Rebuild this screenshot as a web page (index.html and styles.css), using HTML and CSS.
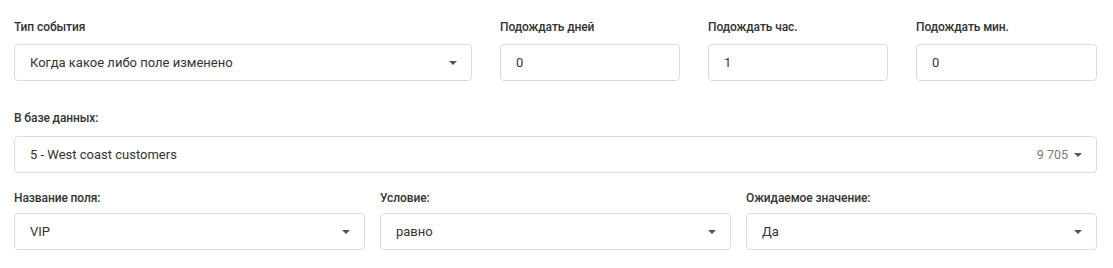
FILE: index.html
```html
<!DOCTYPE html>
<html lang="ru">
<head>
<meta charset="utf-8">
<title>Trigger</title>
<link rel="stylesheet" href="styles.css">
</head>
<body>
<div class="form">
  <div class="row row-top">
    <div class="field">
      <div class="label">Тип события</div>
      <div class="control select">
        <span class="value">Когда какое либо поле изменено</span>
        <span class="caret"></span>
      </div>
    </div>
    <div class="field">
      <div class="label">Подождать дней</div>
      <div class="control"><span class="value">0</span></div>
    </div>
    <div class="field">
      <div class="label">Подождать час.</div>
      <div class="control"><span class="value">1</span></div>
    </div>
    <div class="field">
      <div class="label">Подождать мин.</div>
      <div class="control"><span class="value">0</span></div>
    </div>
  </div>

  <div class="row row-db">
    <div class="field">
      <div class="label">В базе данных:</div>
      <div class="control select">
        <span class="value">5 - West coast customers</span>
        <span class="count">9 705</span>
        <span class="caret"></span>
      </div>
    </div>
  </div>

  <div class="row row-cond">
    <div class="field tight">
      <div class="label">Название поля:</div>
      <div class="control select">
        <span class="value">VIP</span>
        <span class="caret"></span>
      </div>
    </div>
    <div class="field tight">
      <div class="label">Условие:</div>
      <div class="control select">
        <span class="value">равно</span>
        <span class="caret"></span>
      </div>
    </div>
    <div class="field tight">
      <div class="label">Ожидаемое значение:</div>
      <div class="control select">
        <span class="value">Да</span>
        <span class="caret"></span>
      </div>
    </div>
  </div>
</div>
</body>
</html>
```

FILE: styles.css
```css
html, body {
  margin: 0;
  padding: 0;
  background: #ffffff;
}

body {
  font-family: Roboto, "Noto Sans", "Liberation Sans", sans-serif;
  color: #333333;
}

.form {
  padding: 19px 16px 0 14px;
}

.row {
  display: grid;
}

.row-top {
  grid-template-columns: 458px 180px 180px 1fr;
  column-gap: 28px;
}

.row-db {
  grid-template-columns: 1fr;
  margin-top: 29px;
}

.row-cond {
  grid-template-columns: 1fr 1fr 1fr;
  column-gap: 15px;
  margin-top: 17px;
}

.field {
  display: flex;
  flex-direction: column;
  gap: 9px;
  min-width: 0;
}

.row-db .field {
  gap: 10px;
}

.field.tight {
  gap: 7px;
}

.label {
  font-size: 12px;
  line-height: 16px;
  font-weight: 500;
  color: #333333;
  letter-spacing: -0.1px;
}

.control {
  box-sizing: border-box;
  height: 37px;
  border: 1px solid #dcdcdc;
  border-radius: 4px;
  display: flex;
  align-items: center;
  padding: 0 14px 0 15px;
  font-size: 13px;
  color: #333333;
  background: #ffffff;
}

.value {
  flex: 1;
  white-space: nowrap;
  overflow: hidden;
}

.count {
  font-size: 12.5px;
  color: #7a7a7a;
  margin-right: 6px;
}

.caret {
  width: 0;
  height: 0;
  border-left: 4px solid transparent;
  border-right: 4px solid transparent;
  border-top: 4px solid #555555;
  margin-top: 1px;
}
```
